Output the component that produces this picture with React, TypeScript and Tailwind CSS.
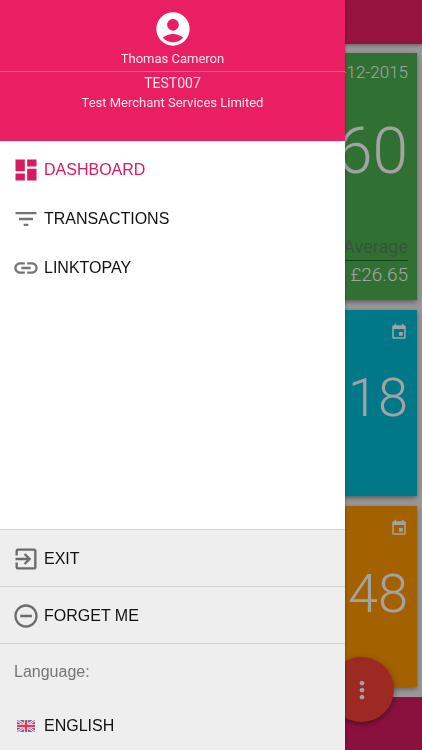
import type { ComponentType, ReactNode } from "react";
import {
  MdAccountCircle,
  MdDashboard,
  MdEvent,
  MdExitToApp,
  MdFilterList,
  MdLink,
  MdMoreVert,
  MdRemoveCircleOutline,
} from "react-icons/md";

type IconType = ComponentType<{ className?: string }>;

function NavItem({ icon: Icon, label, active = false }: { icon: IconType; label: string; active?: boolean }) {
  return (
    <li>
      <a
        href="#"
        aria-current={active ? "page" : undefined}
        className={`flex h-[49px] items-center gap-1 pl-3 ${active ? "text-[#d81b60]" : "text-[#111]"}`}
      >
        <Icon className={`size-7 ${active ? "" : "text-[#757575]"}`} />
        {label}
      </a>
    </li>
  );
}

function FooterAction({ icon: Icon, label }: { icon: IconType; label: string }) {
  return (
    <button type="button" className="flex h-[57px] w-full items-center gap-1 border-t border-[#d4d4d4] pt-px pl-3">
      <Icon className="size-7 text-[#6b6b6b]" />
      {label}
    </button>
  );
}

function UnionFlag({ className }: { className?: string }) {
  return (
    <svg viewBox="0 0 60 40" className={className} aria-hidden="true">
      <rect width="60" height="40" fill="#5c68b4" />
      <path d="M0 0L60 40M60 0L0 40" stroke="#f4eef4" strokeWidth="9" />
      <path d="M0 0L60 40M60 0L0 40" stroke="#e0485c" strokeWidth="3" />
      <path d="M30 0V40M0 20H60" stroke="#f4eef4" strokeWidth="14" />
      <path d="M30 0V40M0 20H60" stroke="#e03a50" strokeWidth="8" />
    </svg>
  );
}

function Card({ className, children }: { className: string; children: ReactNode }) {
  return (
    <section className={`flex flex-col items-end px-[9px] text-white shadow-[0_2px_5px_rgba(0,0,0,0.4)] ${className}`}>
      {children}
    </section>
  );
}

function CountCard({ className, value }: { className: string; value: string }) {
  return (
    <Card className={`pt-[13px] ${className}`}>
      <MdEvent className="size-[18px]" />
      <p className="mt-[25px] text-[54px] leading-[64px] font-light">{value}</p>
    </Card>
  );
}

function Dashboard() {
  return (
    <div className="flex min-h-screen flex-col bg-[#eee] font-[Roboto,sans-serif]">
      <header className="h-11 bg-[#e91e63] shadow-[0_1px_4px_rgba(0,0,0,0.4)]" />
      <main className="flex flex-col gap-[10px] p-[5px] pt-[9px] pb-[10px]">
        <Card className="h-[247px] bg-[#4caf50]">
          <p className="mt-[7px] text-[17px] leading-6 font-light">-12-2015</p>
          <p className="mt-[30px] text-[64px] leading-[76px] font-light">60</p>
          <p className="mt-[43px] w-full border-b border-[#1f6b25] text-right text-lg leading-[27px] text-[#5a835c]">
            Average
          </p>
          <p className="text-[19px] leading-7 font-light">£26.65</p>
        </Card>
        <CountCard className="h-[186px] bg-[#00bcd4]" value="18" />
        <CountCard className="h-[181px] bg-[#ff9800]" value="48" />
      </main>
      <footer className="grow bg-[#d81b60]" />
    </div>
  );
}

function Drawer() {
  return (
    <aside className="fixed inset-y-0 left-0 flex w-[345px] max-w-full flex-col bg-white font-['Liberation_Sans',Arial,sans-serif] text-base text-[#111] shadow-[0_0_3px_rgba(0,0,0,0.4)]">
      <header className="h-[141px] bg-[#e91e63] pt-[9px] text-center font-[Roboto,sans-serif] text-[13px] text-[#fde4ec]">
        <MdAccountCircle className="mx-auto size-10 text-white" />
        <p className="border-b border-[#f2608f] pb-[2px] leading-5">Thomas Cameron</p>
        <p className="pt-px text-sm leading-5">TEST007</p>
        <p className="leading-5">Test Merchant Services Limited</p>
      </header>
      <nav className="grow pt-1">
        <ul>
          <NavItem icon={MdDashboard} label="DASHBOARD" active />
          <NavItem icon={MdFilterList} label="TRANSACTIONS" />
          <NavItem icon={MdLink} label="LINKTOPAY" />
        </ul>
      </nav>
      <div className="bg-[#eee]">
        <FooterAction icon={MdExitToApp} label="EXIT" />
        <FooterAction icon={MdRemoveCircleOutline} label="FORGET ME" />
        <div className="border-t border-[#d4d4d4]">
          <p className="pl-[14px] leading-[56px] text-[#757575]">Language:</p>
          <button type="button" className="flex h-[50px] w-full items-center gap-1 pt-px pl-3">
            <span className="flex w-7 justify-center">
              <UnionFlag className="h-3 w-[18px]" />
            </span>
            ENGLISH
          </button>
        </div>
      </div>
    </aside>
  );
}

export default function App() {
  return (
    <>
      <Dashboard />
      <button
        type="button"
        aria-label="More actions"
        className="fixed right-7 bottom-7 flex size-[65px] items-center justify-center rounded-full bg-[#f44336] text-white shadow-[0_2px_6px_rgba(0,0,0,0.4)]"
      >
        <MdMoreVert className="size-7" />
      </button>
      <div className="fixed inset-0 bg-black/36" />
      <Drawer />
    </>
  );
}
